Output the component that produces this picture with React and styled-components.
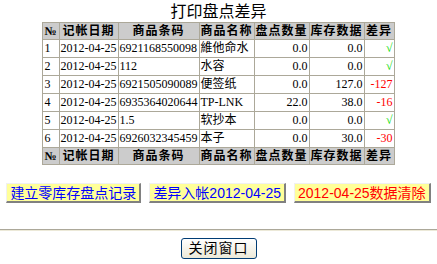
import React from 'react';
import styled, { createGlobalStyle } from 'styled-components';

const GlobalStyle = createGlobalStyle`
  body {
    margin: 0;
    background: #fff;
    font-family: 'Liberation Serif', 'Noto Sans CJK SC', serif;
    font-size: 12px;
    color: #000;
  }
`;

const Page = styled.div`
  width: 437px;
  display: flex;
  flex-direction: column;
  align-items: center;
`;

const Title = styled.div`
  font-family: 'Liberation Serif', 'Noto Sans CJK SC', serif;
  font-size: 16px;
  line-height: 18px;
  height: 18px;
  padding-top: 3px;
  margin-bottom: 1px;
`;

const Table = styled.table`
  border-collapse: collapse;
  border: 1px solid #aca899;
  table-layout: fixed;
`;

const HeadCell = styled.th`
  background: #cccccc;
  border: 1px solid #aca899;
  font-family: 'Liberation Serif', 'Noto Sans CJK SC', serif;
  font-size: 12px;
  font-weight: bold;
  letter-spacing: 1px;
  height: 16px;
  line-height: 16px;
  padding: 0 1px;
  text-align: center;
  white-space: nowrap;
`;

const Cell = styled.td`
  border: 1px solid #aca899;
  height: 17px;
  line-height: 17px;
  padding: 0 1px;
  white-space: nowrap;
  overflow: hidden;
  text-align: ${p => (p.$right ? 'right' : 'left')};
  color: ${p => p.$color || '#000'};
`;

const ButtonRow = styled.div`
  display: flex;
  gap: 8px;
  margin-top: 18px;
`;

const ActionButton = styled.button`
  background: #ffff99;
  color: ${p => p.$color || '#0000ff'};
  font-family: 'Liberation Sans', 'Noto Sans CJK SC', sans-serif;
  font-size: 14px;
  line-height: 16px;
  height: 20px;
  padding: 0 3px;
  border-style: solid;
  border-width: 1px 2px 2px 1px;
  border-color: #f0f0f0 #808080 #808080 #f0f0f0;
  white-space: nowrap;
  cursor: pointer;
`;

const Rule = styled.hr`
  width: 100%;
  margin: 26px 0 0;
  border: 0;
  border-top: 1px solid #aca899;
  border-bottom: 1px solid #ece9d8;
`;

const CloseButton = styled.button`
  margin-top: 7px;
  width: 76px;
  height: 21px;
  border: 1px solid #003c74;
  border-radius: 3px;
  background: linear-gradient(#ffffff, #ece9d8);
  font-family: 'Liberation Sans', 'Noto Sans CJK SC', sans-serif;
  font-size: 14px;
  letter-spacing: 1px;
  line-height: 17px;
  padding: 0;
  color: #000;
  cursor: pointer;
`;

const columns = [
  { label: '№', width: 13 },
  { label: '记帐日期', width: 56 },
  { label: '商品条码', width: 78 },
  { label: '商品名称', width: 52 },
  { label: '盘点数量', width: 52 },
  { label: '库存数据', width: 52 },
  { label: '差异', width: 27 },
];

const rows = [
  { no: 1, date: '2012-04-25', code: '6921168550098', name: '維他命水', count: '0.0', stock: '0.0', diff: '√' },
  { no: 2, date: '2012-04-25', code: '112', name: '水容', count: '0.0', stock: '0.0', diff: '√' },
  { no: 3, date: '2012-04-25', code: '6921505090089', name: '便签纸', count: '0.0', stock: '127.0', diff: '-127' },
  { no: 4, date: '2012-04-25', code: '6935364020644', name: 'TP-LNK', count: '22.0', stock: '38.0', diff: '-16' },
  { no: 5, date: '2012-04-25', code: '1.5', name: '软抄本', count: '0.0', stock: '0.0', diff: '√' },
  { no: 6, date: '2012-04-25', code: '6926032345459', name: '本子', count: '0.0', stock: '30.0', diff: '-30' },
];

function HeaderRow() {
  return (
    <tr>
      {columns.map(c => (
        <HeadCell key={c.label} style={{ width: c.width }}>{c.label}</HeadCell>
      ))}
    </tr>
  );
}

export default function App() {
  return (
    <Page>
      <GlobalStyle />
      <Title>打印盘点差异</Title>
      <Table>
        <thead>
          <HeaderRow />
        </thead>
        <tbody>
          {rows.map(r => (
            <tr key={r.no}>
              <Cell>{r.no}</Cell>
              <Cell>{r.date}</Cell>
              <Cell>{r.code}</Cell>
              <Cell>{r.name}</Cell>
              <Cell $right>{r.count}</Cell>
              <Cell $right>{r.stock}</Cell>
              <Cell $right $color={r.diff === '√' ? '#00dd00' : '#ff0000'}>{r.diff}</Cell>
            </tr>
          ))}
        </tbody>
        <tfoot>
          <HeaderRow />
        </tfoot>
      </Table>
      <ButtonRow>
        <ActionButton>建立零库存盘点记录</ActionButton>
        <ActionButton>差异入帐2012-04-25</ActionButton>
        <ActionButton $color="#ff0000">2012-04-25数据清除</ActionButton>
      </ButtonRow>
      <Rule />
      <CloseButton>关闭窗口</CloseButton>
    </Page>
  );
}
